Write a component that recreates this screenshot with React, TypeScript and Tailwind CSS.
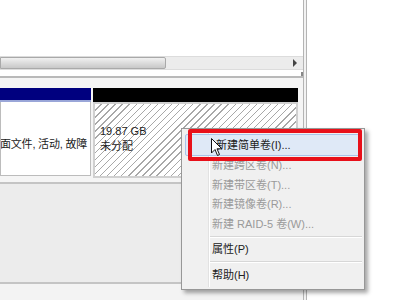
import React from 'react';

const font = { fontFamily: '"Liberation Sans", "Noto Sans CJK SC", sans-serif' };

const MenuItem: React.FC<{ label: string; disabled?: boolean }> = ({ label, disabled }) => (
  <div className={`h-[19.5px] flex items-center pl-[30px] text-[11px] ${disabled ? 'text-[#9a9a9a]' : 'text-[#222]'}`}>
    {label}
  </div>
);

const Separator: React.FC = () => (
  <div className="my-[2px] ml-[28px] mr-[2px] border-t border-[#d7d7d7] border-b-white border-b" />
);

export default function App() {
  return (
    <div className="relative w-[400px] h-[300px] flex bg-white overflow-hidden" style={font}>
      {/* left window */}
      <div className="w-[303px] flex flex-col">
        <div className="h-[56px] bg-white" />
        {/* scrollbar */}
        <div className="h-[14px] flex bg-[#ececec] border-y border-[#dcdcdc]">
          <div className="w-[166px] rounded-r-[2px] border border-[#a9a9a9] bg-gradient-to-b from-[#f1f1f1] via-[#dcdcdc] to-[#c8c8c8]" />
          <div className="flex-1 flex items-center justify-end pr-[6px]">
            <span className="w-0 h-0 border-y-[4px] border-y-transparent border-l-[4px] border-l-[#444]" />
          </div>
        </div>
        <div className="h-[6px] bg-white flex justify-end">
          <div className="w-[2px] h-[4px] mt-[2px] bg-[#888]" />
        </div>
        {/* disk graph */}
        <div className="h-[106px] border-t-2 border-[#b9b9b9] bg-[#f5f5f5] pt-[10px] pr-[5px] flex gap-[2px]">
          <div className="w-[91px] flex flex-col">
            <div className="h-[14px] bg-[#00007f] border-b-2 border-[#9aa6d8]" />
            <div className="h-[74px] bg-white border border-t-0 border-[#bcbcbc] flex items-end pb-[23px] text-[11px] text-[#222] whitespace-nowrap overflow-hidden">
              <span className="-ml-[1px] tracking-[-0.2px]">面文件, 活动, 故障</span>
            </div>
          </div>
          <div className="flex-1 flex flex-col">
            <div className="h-[14px] bg-black" />
            <div className="h-[76px] border-2 border-[#d0d0d0] p-[3px] bg-[repeating-linear-gradient(135deg,#ffffff_0px,#ffffff_4px,#a8a8a8_4px,#a8a8a8_5px)]">
              <div className="pt-[17px] pl-[2px] text-[11px] leading-[15px] text-[#222]">
                <div>19.87 GB</div>
                <div>未分配</div>
              </div>
            </div>
          </div>
        </div>
        <div className="h-[100px] border-t-2 border-[#c4c4c4] bg-[#ececec]" />
        <div className="flex-1 border-t-2 border-[#c4c4c4] bg-[#f3f3f3]" />
      </div>
      {/* window border */}
      <div className="w-[4px] border-x border-[#b4b4b4] bg-[#f2f2f2]" />
      <div className="flex-1 bg-white" />

      {/* context menu */}
      <div className="absolute left-[181px] top-[128px] w-[184px] h-[162px] bg-[#f0f0f0] border border-[#979797] shadow-[3px_3px_4px_rgba(0,0,0,0.35)] pt-[5px]">
        <div className="absolute left-[26px] top-[2px] bottom-[2px] border-l border-[#e2e2e2] border-r border-r-white" />
        <div className="relative mx-[3px] bg-[#dfe9f7] border border-[#aac4ea] rounded-[2px]">
          <MenuItem label="新建简单卷(I)..." />
        </div>
        <div className="relative">
          <MenuItem label="新建跨区卷(N)..." disabled />
          <MenuItem label="新建带区卷(T)..." disabled />
          <MenuItem label="新建镜像卷(R)..." disabled />
          <MenuItem label="新建 RAID-5 卷(W)..." disabled />
          <Separator />
          <MenuItem label="属性(P)" />
          <Separator />
          <MenuItem label="帮助(H)" />
        </div>
      </div>

      {/* red highlight frame */}
      <div className="absolute left-[188px] top-[129px] w-[174px] h-[32px] border-[4px] border-[#e8101a] rounded-[2px]" />

      {/* mouse cursor */}
      <svg className="absolute left-[211px] top-[138px]" width="12" height="19" viewBox="0 0 12 19">
        <path d="M0.5 0.5 L0.5 15 L4 11.5 L6.5 17.5 L8.5 16.5 L6 10.8 L10.8 10.8 Z" fill="#fff" stroke="#111" strokeWidth="1" />
      </svg>
    </div>
  );
}
